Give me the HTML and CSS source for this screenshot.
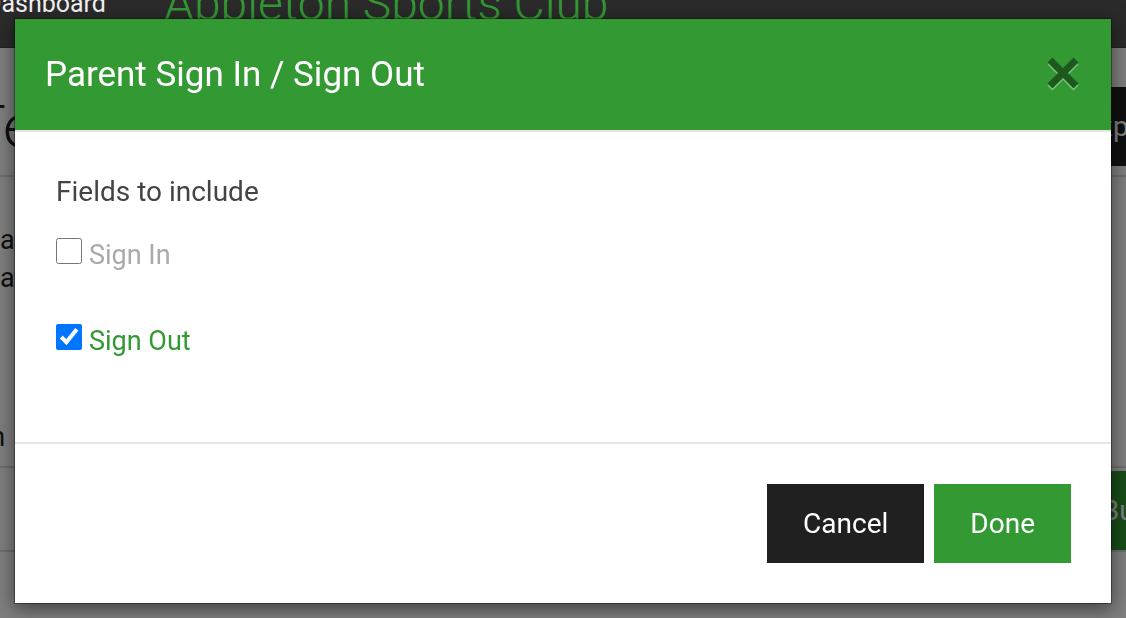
FILE: index.html
```html
<!DOCTYPE html>
<html lang="en">
<head>
  <meta charset="UTF-8">
  <meta name="viewport" content="width=device-width, initial-scale=1.0">
  <title>Parent Sign In / Sign Out</title>
  <link rel="stylesheet" href="styles.css">
</head>
<body>
  <header class="topbar">
    <a class="nav-link" href="#">Dashboard</a>
    <span class="brand">Abbleton Sports Club</span>
  </header>

  <main class="page">
    <div class="title-row">
      <h1>Template</h1>
      <button class="btn btn-dark">Export</button>
    </div>
    <hr>
    <p class="intro">a register layout for your session and choose the fields you would like to print<br>at the top of each sheet. Parents can then sign against each name as they arrive.</p>
    <p class="note">Session</p>
    <div class="section-row">
      <button class="btn btn-green">Build</button>
    </div>
  </main>

  <div class="backdrop"></div>

  <div class="modal">
    <div class="modal-header">
      <h2>Parent Sign In / Sign Out</h2>
      <button class="close" type="button" aria-label="Close">
        <svg width="32" height="34" viewBox="0 0 32 34">
          <path d="M3 4 L29 30 M29 4 L3 30" stroke="currentColor" stroke-width="7" fill="none"/>
        </svg>
      </button>
    </div>
    <div class="modal-body">
      <p class="field-title">Fields to include</p>
      <label class="option">
        <input type="checkbox">
        <span>Sign In</span>
      </label>
      <label class="option checked">
        <input type="checkbox" checked>
        <span>Sign Out</span>
      </label>
    </div>
    <div class="modal-footer">
      <button class="btn btn-dark">Cancel</button>
      <button class="btn btn-green">Done</button>
    </div>
  </div>
</body>
</html>
```

FILE: styles.css
```css
html, body { margin: 0; height: 100%; overflow: hidden; }
body { font-family: Roboto, "Liberation Sans", sans-serif; background: #fff; color: #222; }

.topbar { position: relative; z-index: 2; height: 47px; background: #2b2b2b; border-bottom: 1px solid #242424; display: flex; align-items: flex-start; overflow: hidden; }
.nav-link { color: #f2f2f2; text-decoration: none; font-size: 25px; margin: -11px 0 0 -15px; }
.brand { color: #339933; font-size: 48px; font-weight: 300; margin: -25px 0 0 58px; }

.page { width: 1230px; margin-left: -30px; padding-top: 39px; }
.title-row { display: flex; justify-content: space-between; align-items: center; }
h1 { margin: 0; font-size: 60px; font-weight: 300; }
hr { border: none; border-top: 2px solid #ddd; margin: 9px 0 0; }
.intro { font-size: 27px; line-height: 38px; margin: 44px 0 0 30px; }
.note { font-size: 27px; line-height: 38px; margin: 121px 0 0 -60px; }
.section-row { display: flex; justify-content: flex-end; align-items: center; margin-top: 10px; padding-top: 3px; border-top: 2px solid #ddd; border-bottom: 2px solid #ddd; }

.btn { font-family: Roboto, "Liberation Sans", sans-serif; font-size: 28px; color: #fff; border: none; height: 79px; padding: 0 36px; cursor: pointer; }
.btn-dark { background: #202020; }
.btn-green { background: #339933; }

.backdrop { position: fixed; top: 47px; left: 0; right: 0; bottom: 0; background: rgba(0, 0, 0, 0.5); z-index: 1; }

.modal { position: fixed; z-index: 3; left: 14px; top: 18px; width: 1098px; height: 586px; box-sizing: border-box; background: #fff; border: 1px solid rgba(0, 0, 0, 0.35); background-clip: padding-box; box-shadow: 0 5px 18px rgba(0, 0, 0, 0.5); display: flex; flex-direction: column; }
.modal-header { height: 111px; background: #339933; border-bottom: 2px solid #e5e5e5; display: flex; align-items: center; justify-content: space-between; padding: 0 32px 0 30px; }
.modal-header h2 { margin: 0; color: #fff; font-size: 35px; font-weight: 400; }
.close { background: none; border: none; padding: 0; color: #000; opacity: 0.42; filter: drop-shadow(0 2px 0 rgba(255, 255, 255, 0.9)); cursor: pointer; margin-top: -4px; }
.close svg { display: block; }

.modal-body { flex: 1; padding: 43px 40px 0 41px; }
.field-title { margin: 0 0 29px; font-size: 28px; line-height: 34px; color: #444; }
.option { display: flex; align-items: baseline; gap: 7px; font-size: 27px; color: #aaa; margin-bottom: 53px; }
.option input { width: 26px; height: 26px; margin: 0; }
.option.checked { color: #339933; }

.modal-footer { border-top: 2px solid #e5e5e5; padding: 40px 40px 40px; display: flex; justify-content: flex-end; gap: 10px; }
```
